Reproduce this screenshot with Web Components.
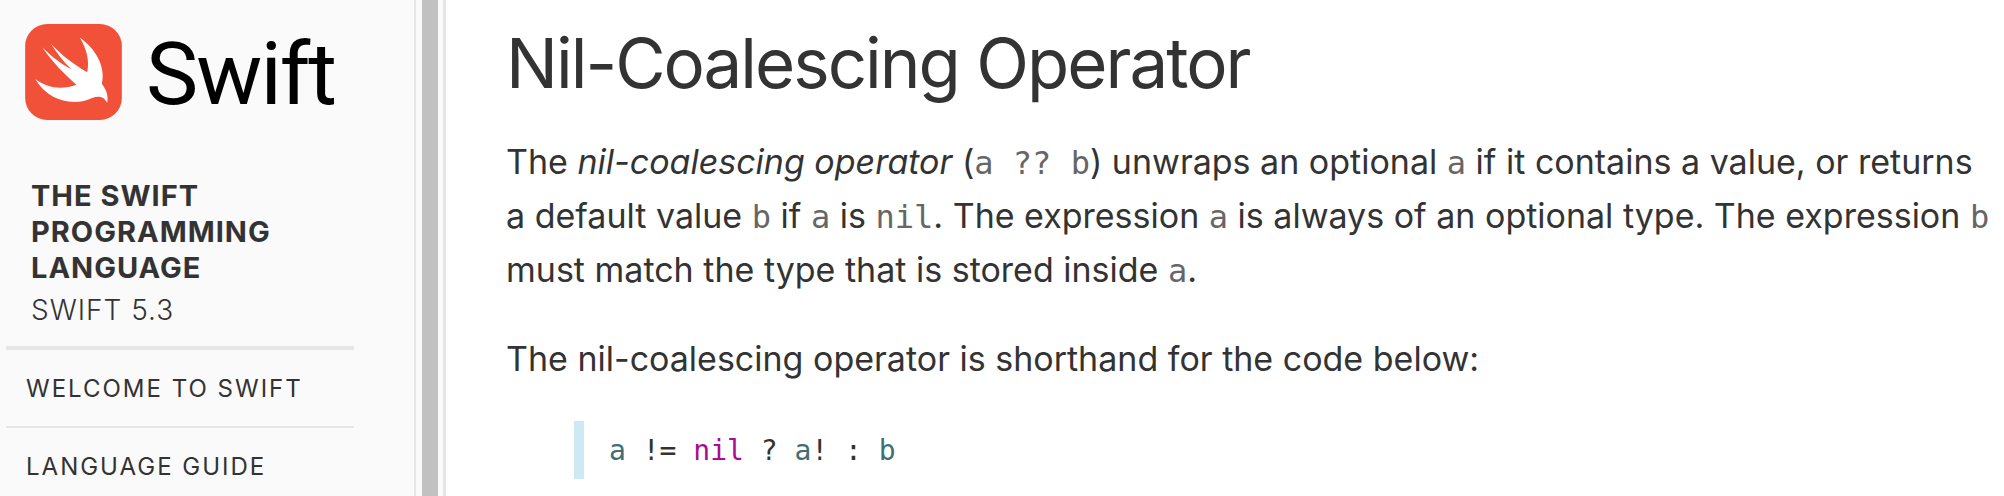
<!DOCTYPE html>
<html lang="en">
<head>
<meta charset="utf-8">
<title>Basic Operators — The Swift Programming Language</title>
<style>
  html, body { height: 100%; }
  body {
    margin: 0;
    background: #fff;
    color: #333;
    font-family: Inter, "Liberation Sans", sans-serif;
  }
</style>
</head>
<body>
<book-page>
  <book-sidebar slot="sidebar">
    <swift-logo slot="logo">Swift</swift-logo>
    <book-title slot="title" version="Swift 5.3">The Swift Programming Language</book-title>
    <nav-entry href="#welcome">Welcome to Swift</nav-entry>
    <nav-entry href="#guide">Language Guide</nav-entry>
  </book-sidebar>
  <book-section>
    <span slot="heading">Nil-Coalescing Operator</span>
    <book-paragraph>The <em>nil-coalescing operator</em> (<code-voice>a ?? b</code-voice>) unwraps an optional <code-voice>a</code-voice> if it contains a value, or returns a default value <code-voice>b</code-voice> if <code-voice>a</code-voice> is <code-voice>nil</code-voice>. The expression <code-voice>a</code-voice> is always of an optional type. The expression <code-voice>b</code-voice> must match the type that is stored inside <code-voice>a</code-voice>.</book-paragraph>
    <book-paragraph>The nil-coalescing operator is shorthand for the code below:</book-paragraph>
    <code-listing><code-token kind="name">a</code-token> != <code-token kind="keyword">nil</code-token> ? <code-token kind="name">a</code-token>! : <code-token kind="name">b</code-token></code-listing>
  </book-section>
</book-page>
<script>
// Whitespace between tags is dropped so inline elements add no stray spaces or lines.
const define = (name, html, setup) => {
  const template = document.createElement('template');
  template.innerHTML = html.replace(/>\s+</g, '><').trim();
  customElements.define(name, class extends HTMLElement {
    constructor() {
      super();
      this.attachShadow({ mode: 'open' }).append(template.content.cloneNode(true));
    }
    connectedCallback() { if (setup) setup(this, this.shadowRoot); }
  });
};

define('book-page', `
  <style>
    :host { display: grid; grid-template-columns: 446px minmax(0, 1fr); min-height: 100%; }
    aside { display: flex; }
    main { padding: 21px 12px 0 60px; }
  </style>
  <aside><slot name="sidebar"></slot></aside>
  <main><slot></slot></main>`);

define('book-sidebar', `
  <style>
    :host { display: flex; flex: 1; background: #fafafa; border-right: 3px solid #e6e6e6; box-sizing: border-box; }
    .column { flex: 1; border-right: 2px solid #e6e6e6; padding: 24px 60px 0 6px; }
    .track { width: 16px; padding: 0 5px 0 6px; display: flex; }
    .thumb { flex: 1; background: #c1c1c1; }
    nav { border-top: 4px solid #e6e6e6; margin-top: 18px; }
  </style>
  <div class="column">
    <slot name="logo"></slot>
    <slot name="title"></slot>
    <nav><slot></slot></nav>
  </div>
  <div class="track"><div class="thumb"></div></div>`);

define('swift-logo', `
  <style>
    :host { display: block; }
    a { display: flex; align-items: center; gap: 24px; height: 96px; padding-left: 19px; color: #000; text-decoration: none; font: 88px/96px Roboto, "Liberation Sans", sans-serif; letter-spacing: -2px; }
    svg { width: 97px; height: 96px; flex: none; }
    span { padding-top: 4px; }
  </style>
  <a href="#top">
    <svg viewBox="45 42 290 288" aria-hidden="true">
      <rect x="45" y="42" width="290" height="288" rx="66" fill="#f05138"/>
      <path fill="#fff" d="M209 83C254 113 288 169 275 221C288 238 296 259 291 278C280 257 263 258 248 263C193 290 116 276 75 207C111 235 157 240 199 224C160 192 124 152 96 112C124 139 153 164 184 178C161 156 141 130 122 101C156 137 190 162 231 187C239 153 229 115 209 83Z"/>
    </svg>
    <span><slot></slot></span>
  </a>`);

define('book-title', `
  <style>
    :host { display: block; padding: 58px 24px 0 25px; font-size: 28px; line-height: 36px; letter-spacing: 1px; text-transform: uppercase; }
    h1 { margin: 0; font-size: 29px; font-weight: 700; }
    p { margin: 6px 0 0; font-weight: 300; }
  </style>
  <h1><slot></slot></h1>
  <p></p>`, (el, root) => { root.querySelector('p').textContent = el.getAttribute('version'); });

define('nav-entry', `
  <style>
    :host { display: block; border-bottom: 2px solid #e6e6e6; }
    a { display: block; padding: 21px 20px 19px; color: #333; font-size: 24px; line-height: 36px; letter-spacing: 2px; text-transform: uppercase; text-decoration: none; }
  </style>
  <a><slot></slot></a>`, (el, root) => { root.querySelector('a').href = el.getAttribute('href'); });

define('book-section', `
  <style>
    :host { display: block; }
    h2 { margin: 0 0 30px; font-size: 69px; line-height: 84px; font-weight: 400; letter-spacing: -2px; }
  </style>
  <section><h2><slot name="heading"></slot></h2><slot></slot></section>`);

define('book-paragraph', `
  <style>
    :host { display: block; }
    p { margin: 0 0 35px; font-size: 34px; line-height: 54px; }
  </style>
  <p><slot></slot></p>`);

define('code-voice', `
  <style>
    code { color: #666; font: 32px/1 "DejaVu Sans Mono", monospace; }
  </style>
  <code><slot></slot></code>`);

define('code-listing', `
  <style>
    :host { display: block; margin-left: 68px; border-left: 10px solid #cde9f4; }
    pre { margin: 0; padding: 12px 25px 10px; font: 28px/36px "DejaVu Sans Mono", monospace; }
    code { font: inherit; }
  </style>
  <pre><code><slot></slot></code></pre>`);

define('code-token', `
  <style>
    :host([kind="name"]) { color: #3f6e74; }
    :host([kind="keyword"]) { color: #aa0d91; }
  </style>
  <slot></slot>`);
</script>
</body>
</html>
